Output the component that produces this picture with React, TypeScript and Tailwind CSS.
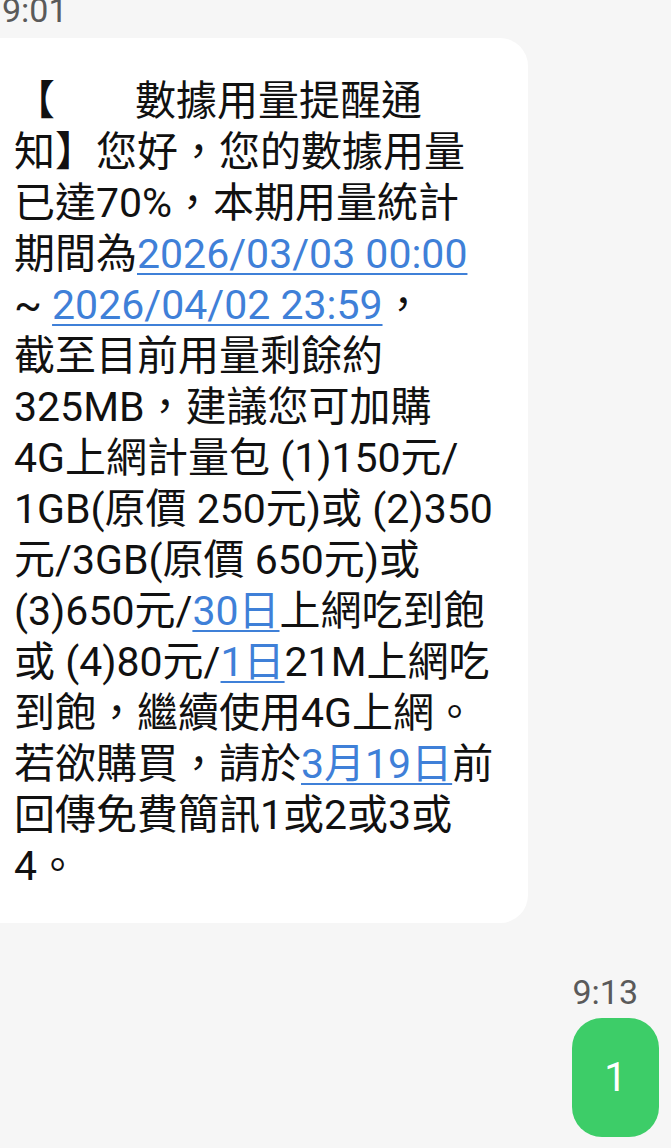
function Link({ children }: { children: React.ReactNode }) {
  return (
    <span className="text-[#3f80d8] underline decoration-2 underline-offset-[5px]">
      {children}
    </span>
  )
}

export default function App() {
  return (
    <div
      className="min-h-[1148px] w-full overflow-hidden bg-[#f6f6f6]"
      style={{ fontFamily: 'Roboto, "Noto Sans CJK TC", sans-serif' }}
    >
      <div className="-mt-[10px] pl-[2px] text-[34px] leading-[40px] text-[#5a5a5a]">9:01</div>

      <div className="mt-[8px] -ml-[30px] w-[558px] rounded-[28px] bg-white pt-[38px] pb-[31px] pl-[44px] text-[41px] leading-[51px] text-[#111111]">
        <div className="whitespace-nowrap">
          【<span className="inline-block w-[80px]" />數據用量提醒通
        </div>
        <div className="whitespace-nowrap">知】您好，您的數據用量</div>
        <div className="whitespace-nowrap">已達70%，本期用量統計</div>
        <div className="whitespace-nowrap">
          期間為<Link>2026/03/03 00:00</Link>
        </div>
        <div className="whitespace-nowrap">
          ~ <Link>2026/04/02 23:59</Link>，
        </div>
        <div className="whitespace-nowrap">截至目前用量剩餘約</div>
        <div className="whitespace-nowrap">325MB，建議您可加購</div>
        <div className="whitespace-nowrap">4G上網計量包 (1)150元/</div>
        <div className="whitespace-nowrap">1GB(原價 250元)或 (2)350</div>
        <div className="whitespace-nowrap">元/3GB(原價 650元)或</div>
        <div className="whitespace-nowrap">
          (3)650元/<Link>30日</Link>上網吃到飽
        </div>
        <div className="whitespace-nowrap">
          或 (4)80元/<Link>1日</Link>21M上網吃
        </div>
        <div className="whitespace-nowrap">到飽，繼續使用4G上網。</div>
        <div className="whitespace-nowrap">
          若欲購買，請於<Link>3月19日</Link>前
        </div>
        <div className="whitespace-nowrap">回傳免費簡訊1或2或3或</div>
        <div className="whitespace-nowrap">4。</div>
      </div>

      <div className="mt-[49px] flex flex-col items-end">
        <div className="pr-[33px] text-[34px] leading-[40px] text-[#5a5a5a]">9:13</div>
        <div className="mt-[6px] mr-[12px] flex h-[119px] w-[87px] items-center justify-center rounded-[30px] bg-[#3dcd68] text-[40px] text-white">
          1
        </div>
      </div>
    </div>
  )
}
